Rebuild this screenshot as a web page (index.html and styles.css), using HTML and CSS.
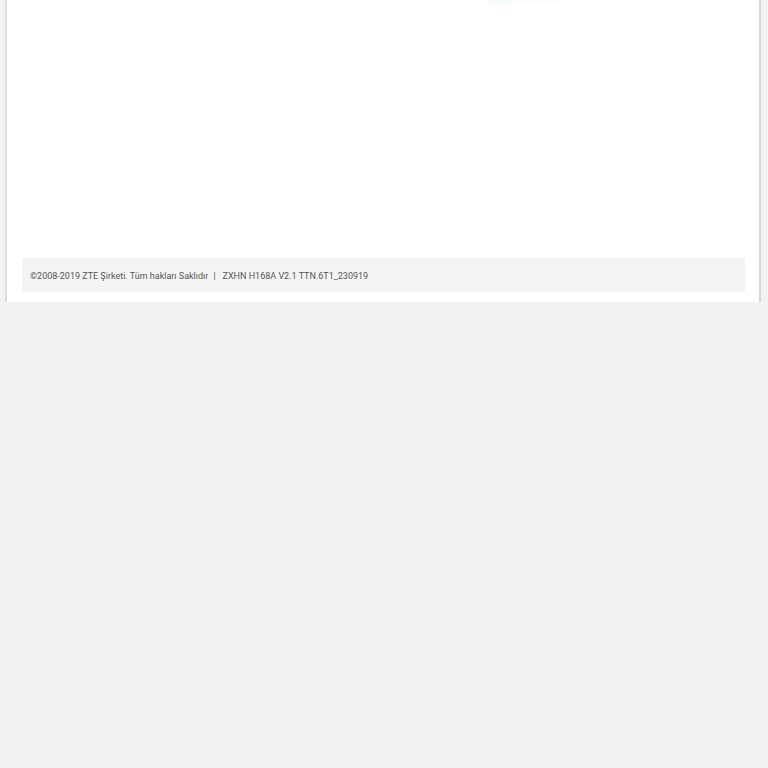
FILE: index.html
```html
<!DOCTYPE html>
<html lang="tr">
<head>
<meta charset="utf-8">
<title>ZXHN H168A</title>
<link rel="stylesheet" href="styles.css">
</head>
<body>
<div class="page">
  <div class="content">
    <div class="logo-ghost"></div>
  </div>
  <div class="footer">
    <span class="copy">©2008-2019 ZTE Şirketi. Tüm hakları Saklıdır</span><span class="sep">|</span><span class="ver">ZXHN H168A V2.1 TTN.6T1_230919</span>
  </div>
</div>
</body>
</html>
```
FILE: styles.css
```css
html, body {
  margin: 0;
  padding: 0;
  background: #f2f2f2;
  font-family: Roboto, "Liberation Sans", Arial, sans-serif;
}
.page {
  margin-left: 5px;
  width: 752px;
  height: 302px;
  background: #ffffff;
  border-left: 2px solid #dcdcdc;
  border-right: 2px solid #d4d4d4;
  display: flex;
  flex-direction: column;
}
.content {
  height: 258px;
  display: flex;
  justify-content: flex-start;
}
.logo-ghost {
  margin-left: 481px;
  width: 72px;
  height: 5px;
  background: linear-gradient(90deg, #f5fcfd, #f9fdfd 60%, #fcfdf8);
  border-radius: 0 0 6px 6px;
}
.footer {
  margin: 0 14px 0 15px;
  height: 34px;
  background: #f4f4f4;
  display: flex;
  align-items: center;
  padding-left: 8px;
  padding-top: 1px;
  box-sizing: border-box;
  font-size: 9px;
  color: #555555;
  white-space: pre;
}
.sep {
  margin: 0 7px 0 5px;
}
```
